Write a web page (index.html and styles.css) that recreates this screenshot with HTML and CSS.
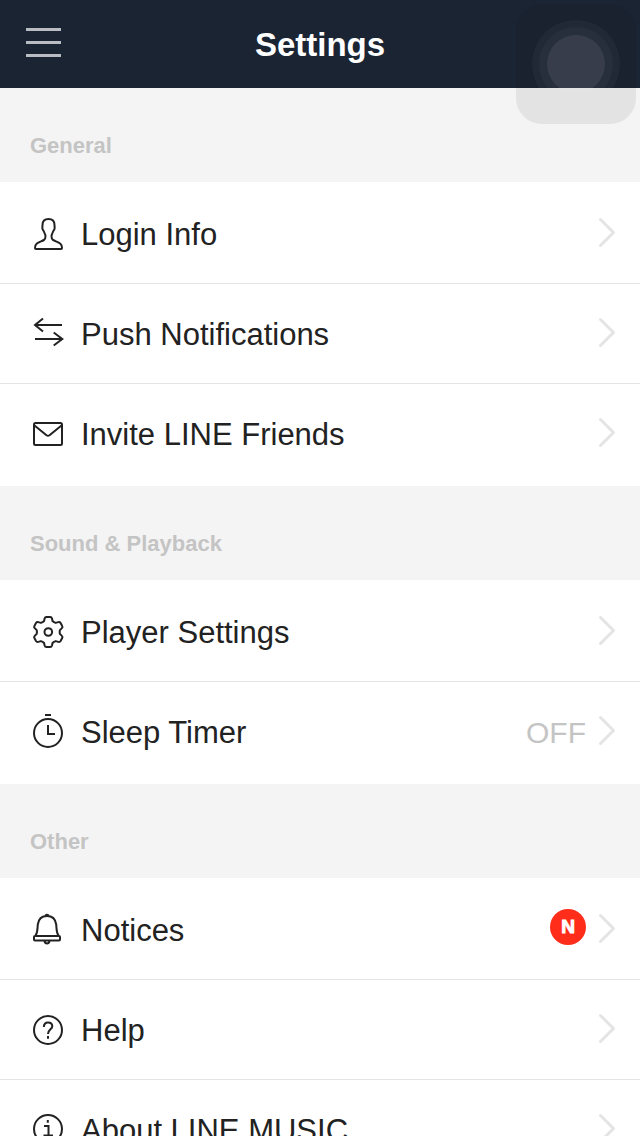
FILE: index.html
```html
<!DOCTYPE html>
<html lang="en">
<head>
<meta charset="utf-8">
<meta name="viewport" content="width=device-width, initial-scale=1">
<title>Settings</title>
<link rel="stylesheet" href="styles.css">
</head>
<body>
<svg class="defs" aria-hidden="true">
  <symbol id="chevron" viewBox="0 0 20 41"><path d="M2.5 6.5L15.5 19.5L2.5 32.5"/></symbol>
</svg>
<div class="app">
  <header class="topbar">
    <button class="menu" type="button" aria-label="Menu"><span class="bar"></span><span class="bar"></span><span class="bar"></span></button>
    <h1 class="title">Settings</h1>
  </header>
  <main class="content">
    <section>
      <h2 class="heading">General</h2>
      <ul class="list">
        <li><a class="row" href="#login">
          <svg class="icon" viewBox="0 0 40 41" aria-hidden="true"><path d="M20.500 6C16.800 6 14.500 8.400 14.500 12C14.500 13.500 14.100 14.500 14.500 16C14.800 17.200 15.600 17.500 16 18.800C16.500 20.500 17.500 21.500 17.500 23C17.500 25.400 17.500 26.200 16 27C13.300 28.400 10.600 29.200 8.600 30.700C7 32 7 33.700 7 35Q7 36 8 36H33Q34 36 34 35C34 33.700 34 32 32.400 30.700C30.400 29.200 27.700 28.400 25 27C23.500 26.200 23.500 25.400 23.500 23C23.500 21.500 24.500 20.500 25 18.800C25.400 17.500 26.200 17.200 26.500 16C26.900 14.500 26.500 13.500 26.500 12C26.500 8.400 24.200 6 20.500 6Z"/></svg>
          <span class="label">Login Info</span>
          <svg class="chevron" aria-hidden="true"><use href="#chevron"/></svg>
        </a></li>
        <li><a class="row" href="#push">
          <svg class="icon" viewBox="0 0 40 41" aria-hidden="true"><path class="square" d="M34 12H7M15 5.500L7 12L15 18.500M7 26H34.500M25.700 19.500L34.300 26L25.700 32.500"/></svg>
          <span class="label">Push Notifications</span>
          <svg class="chevron" aria-hidden="true"><use href="#chevron"/></svg>
        </a></li>
        <li><a class="row" href="#invite">
          <svg class="icon" viewBox="0 0 40 41" aria-hidden="true"><rect x="6" y="10" width="28" height="22" rx="1.500"/><path d="M6.500 12.500L18.500 22.300Q20 23.400 21.500 22.300L33.500 12.500"/></svg>
          <span class="label">Invite LINE Friends</span>
          <svg class="chevron" aria-hidden="true"><use href="#chevron"/></svg>
        </a></li>
      </ul>
    </section>
    <section>
      <h2 class="heading">Sound &amp; Playback</h2>
      <ul class="list">
        <li><a class="row" href="#player">
          <svg class="icon" viewBox="0 0 40 41" aria-hidden="true"><g transform="translate(20.3 21)"><path d="M-4.200-11L-3.700-13.500Q-3.300-15-1.800-15H1.800Q3.300-15 3.700-13.500L4.200-11Q5.600-9.600 7.400-9.100L10-9.900Q11.500-10.300 12.300-9L13.900-6Q14.700-4.900 13.600-3.900L11.600-1.900Q11.100 0 11.600 1.900L13.600 3.900Q14.700 4.900 13.900 6L12.300 9Q11.500 10.300 10 9.900L7.400 9.100Q5.600 9.600 4.200 11L3.700 13.500Q3.300 15 1.800 15H-1.800Q-3.300 15-3.700 13.500L-4.200 11Q-5.600 9.600-7.400 9.100L-10 9.900Q-11.500 10.300-12.300 9L-13.900 6Q-14.700 4.900-13.600 3.900L-11.600 1.900Q-11.100 0-11.600-1.900L-13.600-3.900Q-14.700-4.900-13.900-6L-12.300-9Q-11.500-10.300-10-9.900L-7.400-9.100Q-5.600-9.600-4.200-11Z"/><circle r="3.800"/></g></svg>
          <span class="label">Player Settings</span>
          <svg class="chevron" aria-hidden="true"><use href="#chevron"/></svg>
        </a></li>
        <li><a class="row" href="#sleep">
          <svg class="icon" viewBox="0 0 40 41" aria-hidden="true"><circle cx="20" cy="22" r="14"/><path class="square" d="M17 4H23M20 14V23H27"/></svg>
          <span class="label">Sleep Timer</span>
          <span class="value">OFF</span>
          <svg class="chevron" aria-hidden="true"><use href="#chevron"/></svg>
        </a></li>
      </ul>
    </section>
    <section>
      <h2 class="heading">Other</h2>
      <ul class="list">
        <li><a class="row" href="#notices">
          <svg class="icon" viewBox="0 0 40 41" aria-hidden="true"><path d="M17.500 6.500Q19 5 20.500 6.500M7.500 26.500C10 23 9.300 19 9.800 15.500C10.500 10 14 7 19 7S27.500 10 28.200 15.500C28.700 19 28 23 30.500 26.500M7 27H31Q32 27 32 28V30.500Q32 31.500 31 31.500H7Q6 31.500 6 30.500V28Q6 27 7 27ZM16.500 32Q17 34.500 19 34.500T21.500 32"/></svg>
          <span class="label">Notices</span>
          <span class="badge">N</span>
          <svg class="chevron" aria-hidden="true"><use href="#chevron"/></svg>
        </a></li>
        <li><a class="row" href="#help">
          <svg class="icon" viewBox="0 0 40 41" aria-hidden="true"><circle cx="20" cy="21" r="14"/><path class="square" d="M15.900 18C15.900 15 17.500 13.500 20 13.500S24.300 15 24.300 17.200C24.300 20.300 20 20.500 20 25M20 27V29.800"/></svg>
          <span class="label">Help</span>
          <svg class="chevron" aria-hidden="true"><use href="#chevron"/></svg>
        </a></li>
        <li><a class="row" href="#about">
          <svg class="icon" viewBox="0 0 40 41" aria-hidden="true"><circle cx="20" cy="20" r="14"/><path class="square" d="M19.800 11V13.800M16 17H20.500V26.500M15.500 26.500H25"/></svg>
          <span class="label">About LINE MUSIC</span>
          <svg class="chevron" aria-hidden="true"><use href="#chevron"/></svg>
        </a></li>
      </ul>
    </section>
  </main>
  <button class="assist" type="button" aria-label="Assistive touch"><span class="ring"><span class="ring-mid"><span class="dot"></span></span></span></button>
</div>
</body>
</html>
```
FILE: styles.css
```css
* { box-sizing: border-box; }

body {
  margin: 0;
  background: #fff;
  color: #222;
  font-family: "Liberation Sans", Arial, sans-serif;
}

.defs { position: absolute; width: 0; height: 0; }

.app {
  position: relative;
  display: flex;
  flex-direction: column;
  height: 100vh;
  overflow: hidden;
}

.topbar {
  flex: none;
  display: grid;
  grid-template-columns: 1fr auto 1fr;
  align-items: center;
  height: 88px;
  padding: 0 26px;
  background: #1b2433;
}

.menu {
  display: flex;
  flex-direction: column;
  gap: 10px;
  width: 35px;
  margin: 0 0 4px;
  padding: 0;
  border: 0;
  background: none;
}

.bar { width: 100%; height: 3px; background: #b9bdc3; }

.title {
  margin: 0;
  padding-top: 2px;
  color: #fff;
  font-size: 33px;
  font-weight: 700;
  line-height: 40px;
}

.content {
  flex: 1;
  min-height: 0;
  overflow-y: auto;
  scrollbar-width: none;
}

.heading {
  margin: 0;
  padding: 45px 30px 23px;
  background: #f4f4f4;
  color: #c4c4c4;
  font-size: 22px;
  font-weight: 700;
  line-height: 26px;
}

.list {
  margin: 0;
  padding: 2px 0;
  list-style: none;
}

.row {
  display: flex;
  align-items: center;
  gap: 12px;
  height: 100px;
  padding: 0 22px 0 28px;
  border-bottom: 1px solid #e5e5e5;
  color: inherit;
  text-decoration: none;
}

li:last-child .row { border-color: transparent; }

.icon {
  flex: none;
  width: 40px;
  height: 41px;
  fill: none;
  stroke: #222;
  stroke-width: 2;
  stroke-linecap: round;
  stroke-linejoin: round;
}

.square { stroke-linecap: butt; stroke-linejoin: miter; }

.label {
  flex: 1;
  padding: 2px 0 0 1px;
  font-size: 31px;
  line-height: 36px;
}

.value {
  padding-top: 3px;
  color: #c4c4c4;
  font-size: 30px;
  line-height: 36px;
}

.badge {
  display: flex;
  align-items: center;
  justify-content: center;
  width: 36px;
  height: 36px;
  margin-bottom: 5px;
  border-radius: 50%;
  background: #ff2d1a;
  color: #fff;
  font-size: 19px;
  font-weight: 700;
  line-height: 36px;
  -webkit-text-stroke: 1px #fff;
}

.chevron {
  flex: none;
  width: 20px;
  height: 41px;
  fill: none;
  stroke: #e4e4e4;
  stroke-width: 3;
  stroke-linecap: round;
  stroke-linejoin: round;
}

.assist {
  position: absolute;
  top: 4px;
  right: 4px;
  display: grid;
  place-items: center;
  width: 120px;
  height: 120px;
  padding: 0;
  border: 0;
  border-radius: 26px;
  background: rgba(20, 20, 20, 0.07);
}

.ring, .ring-mid, .dot {
  display: grid;
  place-items: center;
  border-radius: 50%;
}

.ring { width: 88px; height: 88px; background: rgba(255, 255, 255, 0.03); }
.ring-mid { width: 74px; height: 74px; background: rgba(255, 255, 255, 0.03); }
.dot { width: 58px; height: 58px; background: rgba(255, 245, 255, 0.08); }
```
